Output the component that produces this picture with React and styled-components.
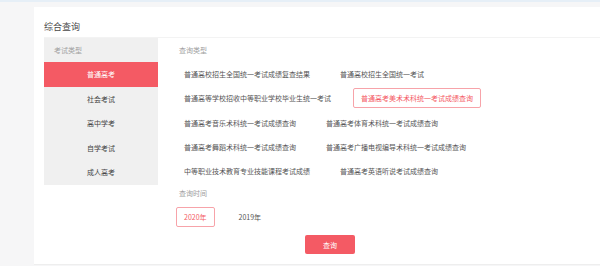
import React, { useState } from 'react';
import styled, { createGlobalStyle } from 'styled-components';

const GlobalStyle = createGlobalStyle`
  html, body {
    margin: 0;
    padding: 0;
    background: #f6f6f7;
    font-family: "Noto Sans CJK SC", "Noto Sans", "Liberation Sans", sans-serif;
    overflow: hidden;
  }
`;

const examTypes = ['普通高考', '社会考试', '高中学考', '自学考试', '成人高考'];

const queryTypes = [
  '普通高校招生全国统一考试成绩复查结果',
  '普通高校招生全国统一考试',
  '普通高等学校招收中等职业学校毕业生统一考试',
  '普通高考美术术科统一考试成绩查询',
  '普通高考音乐术科统一考试成绩查询',
  '普通高考体育术科统一考试成绩查询',
  '普通高考舞蹈术科统一考试成绩查询',
  '普通高考广播电视编导术科统一考试成绩查询',
  '中等职业技术教育专业技能课程考试成绩',
  '普通高考英语听说考试成绩查询',
];

const years = ['2020年', '2019年'];

const App = () => {
  const [exam, setExam] = useState(0);
  const [query, setQuery] = useState(3);
  const [year, setYear] = useState(0);

  return (
    <>
      <GlobalStyle />
      <Page>
        <TopLine />
        <Main>
          <Card>
            <Title>综合查询</Title>
            <Body>
              <SideMenu>
                <SideLabel>考试类型</SideLabel>
                {examTypes.map((name, i) => (
                  <SideItem key={name} active={i === exam} onClick={() => setExam(i)}>
                    {name}
                  </SideItem>
                ))}
              </SideMenu>
              <Content>
                <Label>查询类型</Label>
                <OptionList>
                  {queryTypes.map((name, i) => (
                    <Option key={name} selected={i === query} onClick={() => setQuery(i)}>
                      {name}
                    </Option>
                  ))}
                </OptionList>
                <Label>查询时间</Label>
                <YearList>
                  {years.map((y, i) => (
                    <Option key={y} selected={i === year} onClick={() => setYear(i)}>
                      {y}
                    </Option>
                  ))}
                </YearList>
                <SubmitBtn type="button">查询</SubmitBtn>
              </Content>
            </Body>
          </Card>
        </Main>
      </Page>
    </>
  );
};

const Page = styled.div`
  width: 600px;
  height: 266px;
  display: flex;
  flex-direction: column;
`;

const TopLine = styled.div`
  height: 2px;
  background: #e6eff7;
`;

const Main = styled.div`
  flex: 1;
  display: flex;
  padding: 5px 0 1px 34px;
`;

const Card = styled.div`
  flex: 1;
  background: #ffffff;
  padding: 0 0 0 10px;
  border-bottom: 1px solid #eeeeee;
`;

const Title = styled.h3`
  margin: 0;
  padding: 14px 0 4px;
  line-height: 12px;
  font-size: 9px;
  font-weight: normal;
  color: #4a4a4a;
`;

const Body = styled.div`
  display: flex;
  align-items: flex-start;
  border-top: 1px solid #f3f3f3;
`;

const SideMenu = styled.div`
  width: 114px;
  background: #f0f0f0;
  display: flex;
  flex-direction: column;
`;

const SideLabel = styled.div`
  height: 24px;
  line-height: 24px;
  padding-left: 10px;
  font-size: 7px;
  color: #a0a0a0;
`;

const SideItem = styled.div`
  height: 24.6px;
  line-height: 24.6px;
  text-align: center;
  font-size: 7px;
  color: ${props => (props.active ? '#ffffff' : '#444444')};
  background: ${props => (props.active ? '#f45a64' : 'transparent')};
  cursor: pointer;
`;

const Content = styled.div`
  flex: 1;
  padding: 6px 0 0 18px;
  display: flex;
  flex-direction: column;
  align-items: flex-start;
`;

const Label = styled.div`
  margin-left: 3px;
  line-height: 12px;
  font-size: 7px;
  color: #a0a0a0;
`;

const OptionList = styled.div`
  display: flex;
  flex-wrap: wrap;
  column-gap: 14px;
  row-gap: 4.3px;
  max-width: 380px;
  margin: 8px 0 6px;
`;

const YearList = styled.div`
  display: flex;
  column-gap: 16px;
  margin: 8px 0 8px;
`;

const Option = styled.div`
  box-sizing: border-box;
  height: 20px;
  line-height: 18px;
  padding: 0 7px;
  border: 1px solid ${props => (props.selected ? '#f7a3a9' : 'transparent')};
  border-radius: 2px;
  font-size: 7px;
  white-space: nowrap;
  color: ${props => (props.selected ? '#f45a64' : '#555555')};
  cursor: pointer;
`;

const SubmitBtn = styled.button`
  width: 50px;
  height: 19px;
  margin-left: 129px;
  padding: 0;
  border: none;
  border-radius: 2px;
  background: #f45a64;
  color: #ffffff;
  font-family: inherit;
  font-size: 7px;
  cursor: pointer;
`;

export default App;
